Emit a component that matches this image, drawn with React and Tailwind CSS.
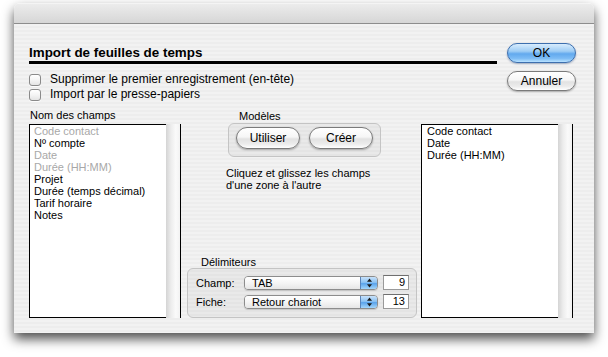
import React from "react";

const F = { fontFamily: '"Liberation Sans", Arial, sans-serif' };

function Check({ label }) {
  return (
    <div className="flex items-center h-[15px]">
      <div className="w-[12px] h-[12px] rounded-[3px] border border-[#8a8a8a] bg-[linear-gradient(180deg,#ffffff_0%,#f4f4f4_50%,#e4e4e4_100%)] shadow-[0_1px_0_rgba(255,255,255,0.8)]" />
      <span className="ml-[9px] text-[12px] leading-[15px] text-black">{label}</span>
    </div>
  );
}

function AquaButton({ children, w, blue }) {
  return (
    <div
      className={
        (blue
          ? "border-[#3d6fae] bg-[linear-gradient(180deg,#d8ecfd_0%,#9fcdf5_40%,#62a9ee_55%,#7dbcf5_80%,#b9e2ff_100%)] shadow-[0_1px_2px_rgba(0,40,100,0.35)] "
          : "border-[#7a7a7a] bg-[linear-gradient(180deg,#ffffff_0%,#f6f6f6_45%,#e2e2e2_55%,#ececec_80%,#ffffff_100%)] shadow-[0_1px_2px_rgba(0,0,0,0.3)] ") +
        "flex items-center justify-center rounded-full border text-[12px] text-black " +
        w
      }
    >
      {children}
    </div>
  );
}

function ListBox({ items, padLeft }) {
  return (
    <div className="flex h-[194px]">
      <div className={"w-[137px] bg-white border-l border-t border-b border-black text-[11px] leading-[12px] " + padLeft}>
        {items.map(([t, g]) => (
          <div key={t} className={g ? "text-[#a8a8a8]" : "text-black"}>
            {t}
          </div>
        ))}
      </div>
      <div className="w-[15px] border-r border-black bg-[linear-gradient(90deg,#d4d4d4_0%,#ececec_35%,#fafafa_70%,#f2f2f2_100%)]" />
    </div>
  );
}

function Popup({ text }) {
  return (
    <div className="flex h-[14px] w-[134px] rounded-[4px] border border-[#8c8c8c] overflow-hidden shadow-[0_1px_1px_rgba(0,0,0,0.15)]">
      <div className="flex-1 bg-[linear-gradient(180deg,#ffffff_0%,#f5f5f5_50%,#e6e6e6_100%)] pl-[7px] text-[11px] leading-[12px] text-black">
        {text}
      </div>
      <div className="w-[17px] flex items-center justify-center border-l border-[#5a83b8] bg-[linear-gradient(180deg,#c8e2fb_0%,#8cc2f2_45%,#5aa3eb_55%,#a4d6fb_100%)]">
        <svg width="7" height="10" viewBox="0 0 7 10">
          <path d="M3.5 0.5 L6 3.8 L1 3.8 Z" fill="#1a1a1a" />
          <path d="M3.5 9.5 L6 6.2 L1 6.2 Z" fill="#1a1a1a" />
        </svg>
      </div>
    </div>
  );
}

function NumField({ v }) {
  return (
    <div className="ml-[5px] h-[15px] w-[26px] bg-white border border-[#9a9a9a] border-t-[#6f6f6f] text-right pr-[3px] text-[11px] leading-[13px] text-black">
      {v}
    </div>
  );
}

export default function App() {
  return (
    <div className="w-[608px] h-[357px] bg-white pl-[14px] pt-[3px] overflow-hidden" style={F}>
      <div className="w-[580px] h-[330px] rounded-t-[6px] flex flex-col overflow-hidden shadow-[0_6px_12px_rgba(0,0,0,0.7)]">
        <div className="h-[21px] shrink-0 border-b border-[#8d8d8d] border-t border-t-[#f4f4f4] bg-[linear-gradient(180deg,#ececec_0%,#d6d6d6_100%)]" />
        <div className="flex-1 flex flex-col pl-[15px] bg-[image:repeating-linear-gradient(180deg,#f2f2f2_0px,#f2f2f2_2px,#ededed_2px,#ededed_4px)]">
          {/* top row */}
          <div className="flex items-start pt-[19px]">
            <div className="w-[468px]">
              <div className="mt-[1px] h-[17px] text-[13.4px] leading-[17px] font-bold text-black">
                Import de feuilles de temps
              </div>
              <div className="h-[3px] bg-black" />
              <div className="mt-[8px]">
                <Check label="Supprimer le premier enregistrement (en-tête)" />
                <Check label="Import par le presse-papiers" />
              </div>
            </div>
            <div className="ml-[10px] flex flex-col gap-[8px]">
              <AquaButton w="w-[69px] h-[20px]" blue>
                OK
              </AquaButton>
              <AquaButton w="w-[69px] h-[20px]">Annuler</AquaButton>
            </div>
          </div>

          {/* main row */}
          <div className="flex mt-[7px]">
            <div className="w-[152px]">
              <div className="h-[15px] pl-[1px] text-[11px] leading-[13px] text-black">Nom des champs</div>
              <ListBox
                padLeft="pl-[4px]"
                items={[
                  ["Code contact", true],
                  ["Nº compte", false],
                  ["Date", true],
                  ["Durée (HH:MM)", true],
                  ["Projet", false],
                  ["Durée (temps décimal)", false],
                  ["Tarif horaire", false],
                  ["Notes", false],
                ]}
              />
            </div>

            <div className="ml-[6px] w-[234px] h-[209px] flex flex-col">
              <div className="h-[14px] pl-[52px] text-[11px] leading-[14px] text-black">Modèles</div>
              <div className="ml-[41px] w-[153px] h-[34px] rounded-[6px] border border-[#c4c4c4] bg-[rgba(0,0,0,0.035)] flex items-start pt-[3px] pl-[7px] gap-[9px]">
                <AquaButton w="w-[64px] h-[22px]">Utiliser</AquaButton>
                <AquaButton w="w-[64px] h-[22px]">Créer</AquaButton>
              </div>
              <div className="mt-[10px] pl-[39px] text-[11px] leading-[12px] text-black">
                Cliquez et glissez les champs
                <br />
                d'une zone à l'autre
              </div>
              <div className="mt-auto">
                <div className="h-[12px] pl-[14px] text-[11px] leading-[12px] text-black">Délimiteurs</div>
                <div className="w-[230px] h-[50px] rounded-[6px] border border-[#c4c4c4] bg-[rgba(0,0,0,0.035)] pt-[6px] pl-[8px] flex flex-col gap-[4px]">
                  <div className="flex items-center">
                    <div className="w-[48px] text-[11px] leading-[14px] text-black">Champ:</div>
                    <Popup text="TAB" />
                    <NumField v="9" />
                  </div>
                  <div className="flex items-center">
                    <div className="w-[48px] text-[11px] leading-[14px] text-black">Fiche:</div>
                    <Popup text="Retour chariot" />
                    <NumField v="13" />
                  </div>
                </div>
              </div>
            </div>

            <div className="w-[152px] pt-[15px]">
              <ListBox
                padLeft="pl-[5px]"
                items={[
                  ["Code contact", false],
                  ["Date", false],
                  ["Durée (HH:MM)", false],
                ]}
              />
            </div>
          </div>
        </div>
      </div>
    </div>
  );
}
